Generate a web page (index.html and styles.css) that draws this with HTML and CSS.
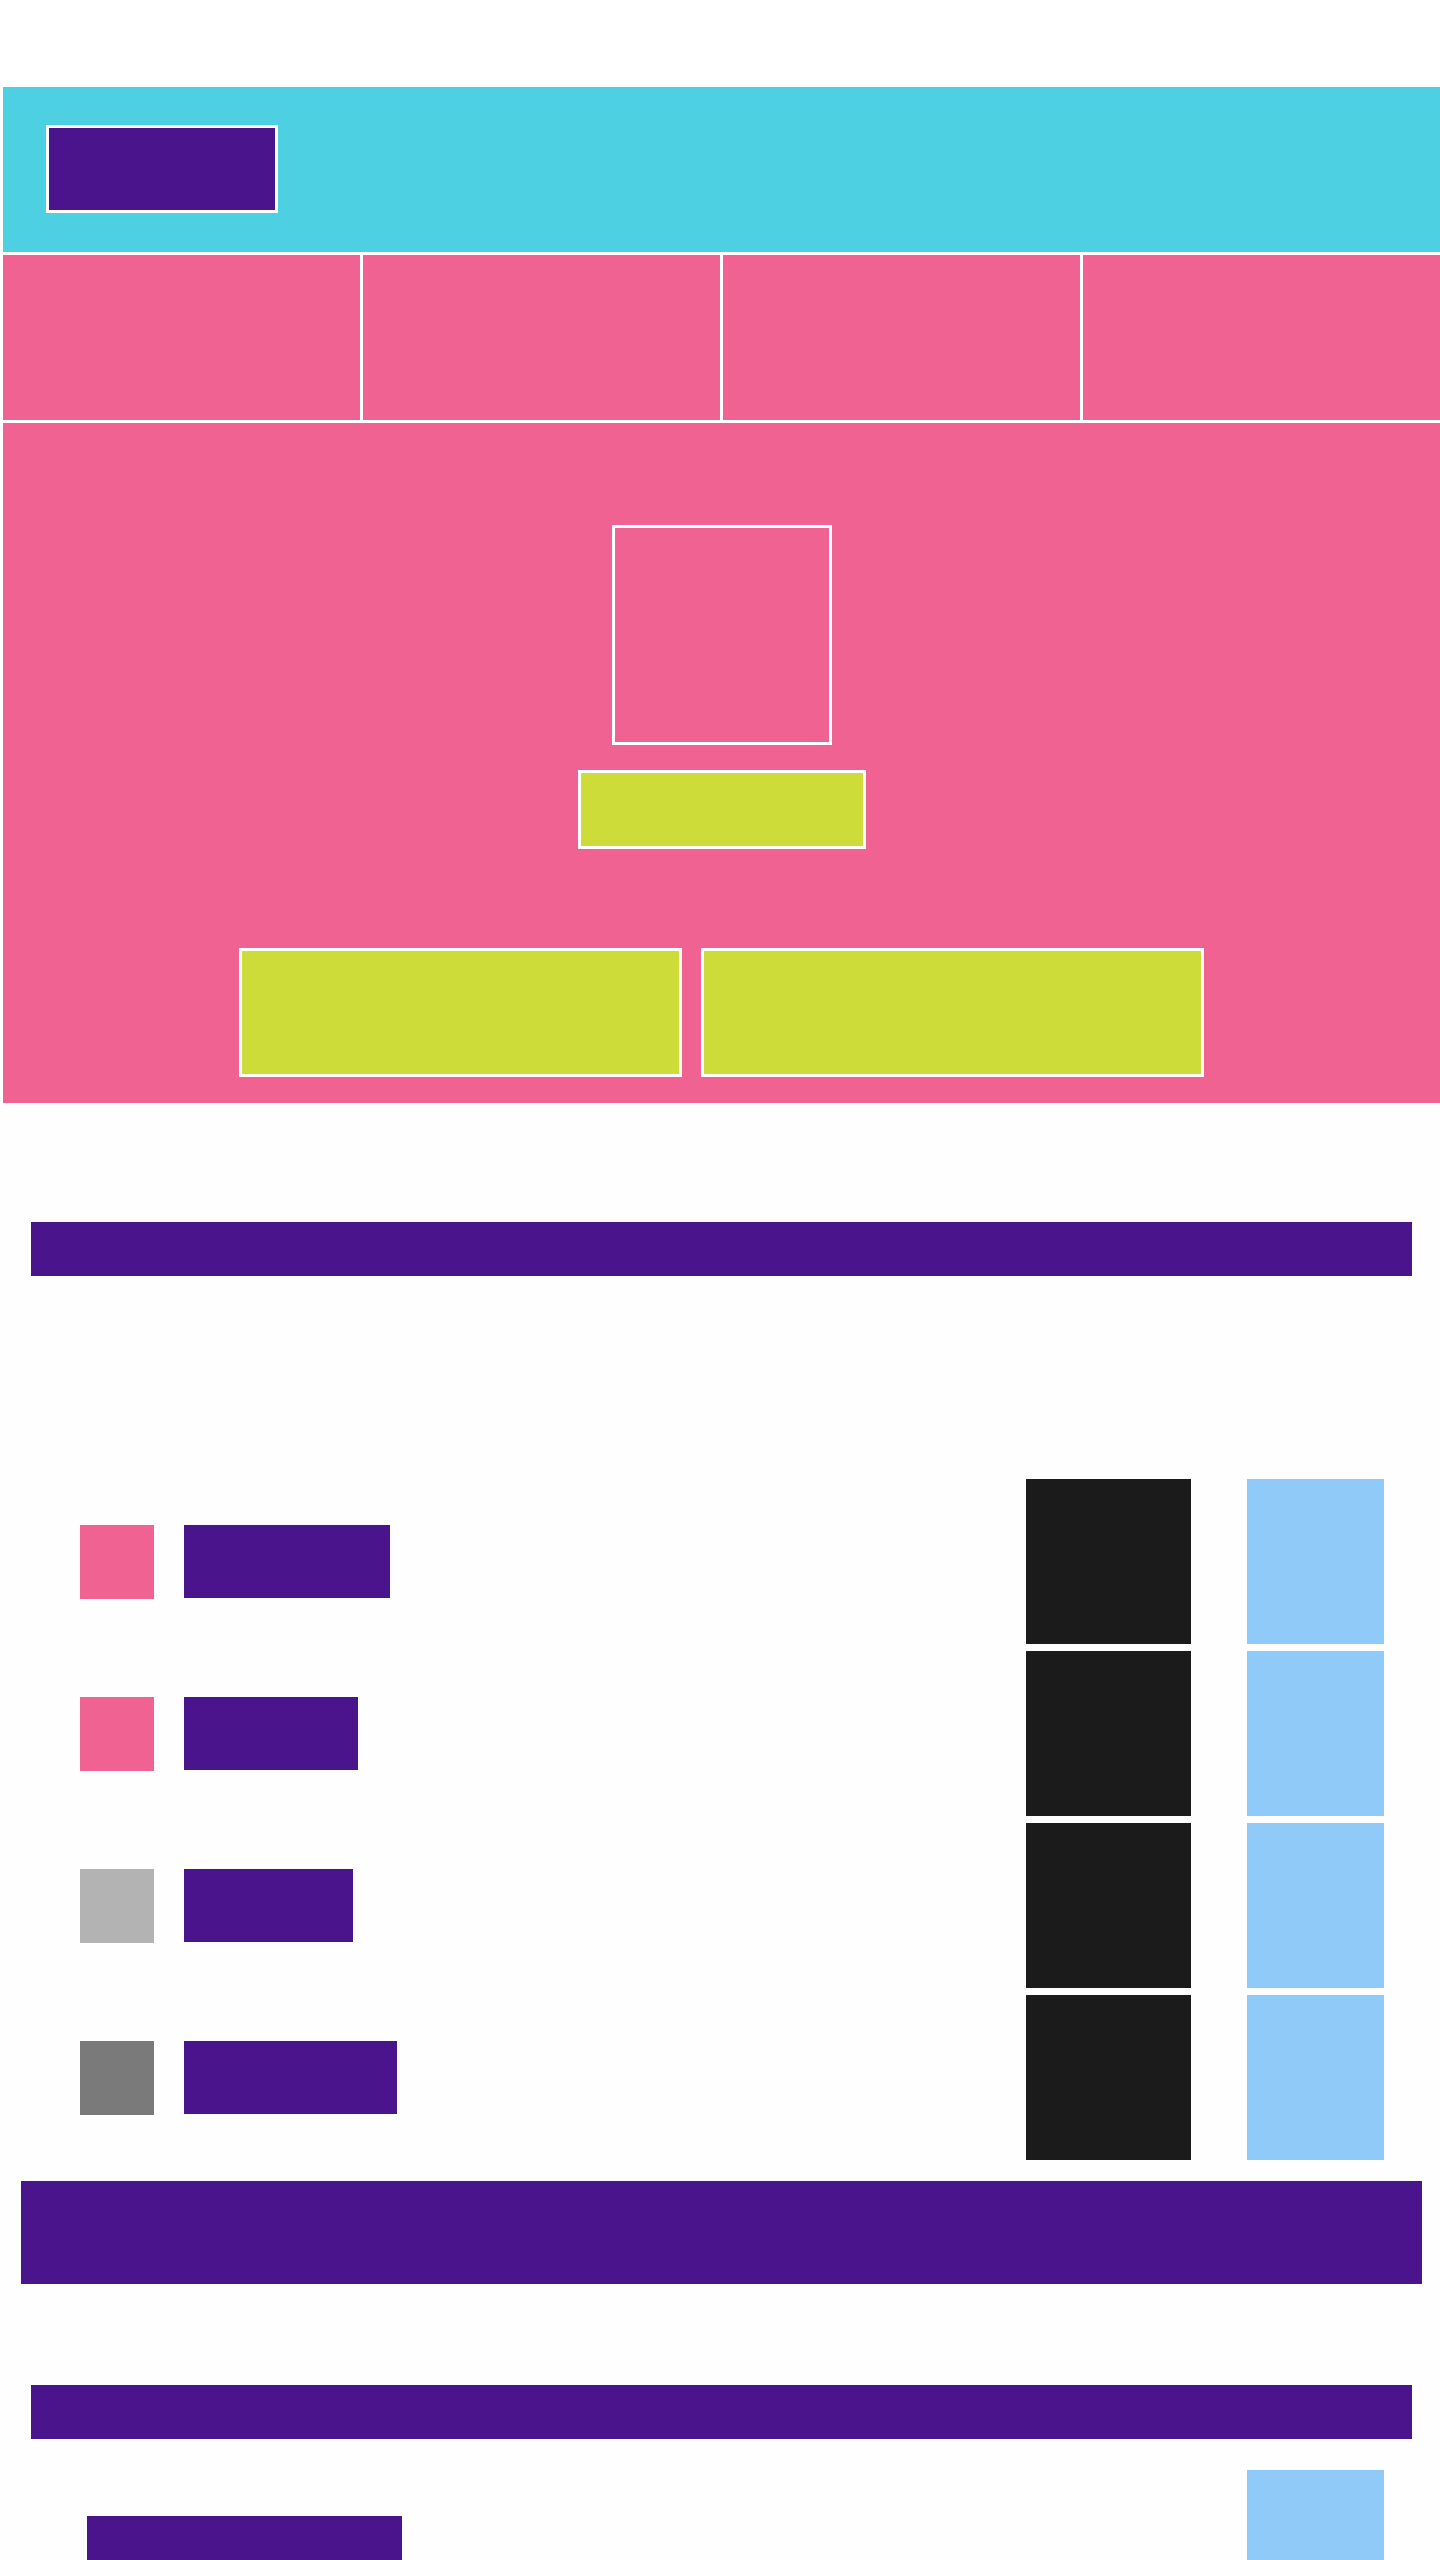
FILE: index.html
```html
<!doctype html>
<html lang="en">
<head>
 <meta charset="utf-8" />
 <meta name="viewport" content="width=device-width, initial-scale=1" />
 <title>Wireframe</title>
 <link rel="stylesheet" href="styles.css">
</head>
<body>
 <div class="page">
 <section class="hero">
 <header class="topbar">
 <div class="logo" aria-label="Logo"></div>
 </header>

 <nav class="tabs">
 <div class="tab"></div>
 <div class="tab"></div>
 <div class="tab"></div>
 <div class="tab"></div>
 </nav>

 <div class="stage">
 <div class="frame"></div>
 <div class="pill"></div>
 <div class="actions">
 <div class="btn btn-a"></div>
 <div class="btn btn-b"></div>
 </div>
 </div>
 </section>

 <main class="content">
 <div class="bar bar-first"></div>

 <div class="list">
 <div class="row">
 <div class="row-main">
 <span class="swatch pink"></span>
 <span class="label w1"></span>
 </div>
 <div class="dark"></div>
 <div class="light"></div>
 </div>
 <div class="row">
 <div class="row-main">
 <span class="swatch pink"></span>
 <span class="label w2"></span>
 </div>
 <div class="dark"></div>
 <div class="light"></div>
 </div>
 <div class="row">
 <div class="row-main">
 <span class="swatch silver"></span>
 <span class="label w3"></span>
 </div>
 <div class="dark"></div>
 <div class="light"></div>
 </div>
 <div class="row">
 <div class="row-main">
 <span class="swatch grey"></span>
 <span class="label w4"></span>
 </div>
 <div class="dark"></div>
 <div class="light"></div>
 </div>
 </div>

 <div class="bar bar-wide"></div>
 <div class="bar bar-next"></div>

 <div class="row row-last">
 <div class="row-main">
 <span class="label w5"></span>
 </div>
 <div class="dark blank"></div>
 <div class="light"></div>
 </div>
 </main>
 </div>
</body>
</html>
```

FILE: styles.css
```css
:root{
--cyan:#4dd0e1;
--pink:#f06292;
--purple:#4a148c;
--lime:#cddc39;
--ink:#1b1b1b;
--sky:#90caf9;
}
*{box-sizing:border-box}
body{
margin:0;
background:#fff;
font-family:"Liberation Sans",Arial,sans-serif;
}
.page{padding-top:87px}

/* hero block */
.hero{margin-left:3px; display:flex; flex-direction:column; gap:3px}
.topbar{height:165px; background:var(--cyan); padding:38px 0 0 43px}
.logo{width:232px; height:88px; background:var(--purple); border:3px solid #fff}
.tabs{display:grid; grid-template-columns:repeat(4,1fr); gap:3px; height:165px}
.tab{background:var(--pink)}
.stage{
background:var(--pink);
height:680px;
padding-top:102px;
display:flex; flex-direction:column; align-items:center;
}
.frame{width:220px; height:220px; border:3px solid #fff}
.pill{margin-top:25px; width:288px; height:79px; background:var(--lime); border:3px solid #fff}
.actions{margin-top:99px; display:flex; gap:19px}
.btn{height:129px; background:var(--lime); border:3px solid #fff}
.btn-a{width:443px}
.btn-b{width:503px}

/* content */
.content{background:#fefefe; padding:119px 0 40px}
.bar{margin:0 28px 0 31px; height:54px; background:var(--purple)}
.bar-wide{margin:21px 18px 0 21px; height:103px}
.bar-next{margin-top:101px}

.list{margin-top:203px; display:flex; flex-direction:column; gap:7px}
.row{display:flex; height:165px; gap:56px; padding-right:56px}
.row-main{flex:1; display:flex; align-items:center; gap:30px; padding-left:80px; margin-right:-56px}
.swatch{width:74px; height:74px; flex:none}
.swatch.pink{background:var(--pink)}
.swatch.silver{background:#b3b3b3}
.swatch.grey{background:#7a7a7a}
.label{height:73px; background:var(--purple); flex:none}
.w1{width:206px}
.w2{width:174px}
.w3{width:169px}
.w4{width:213px}
.w5{width:315px}
.dark{width:165px; background:var(--ink)}
.light{width:137px; background:var(--sky)}

.row-last{margin-top:31px}
.row-last .row-main{padding-left:87px}
.dark.blank{background:transparent}
```
